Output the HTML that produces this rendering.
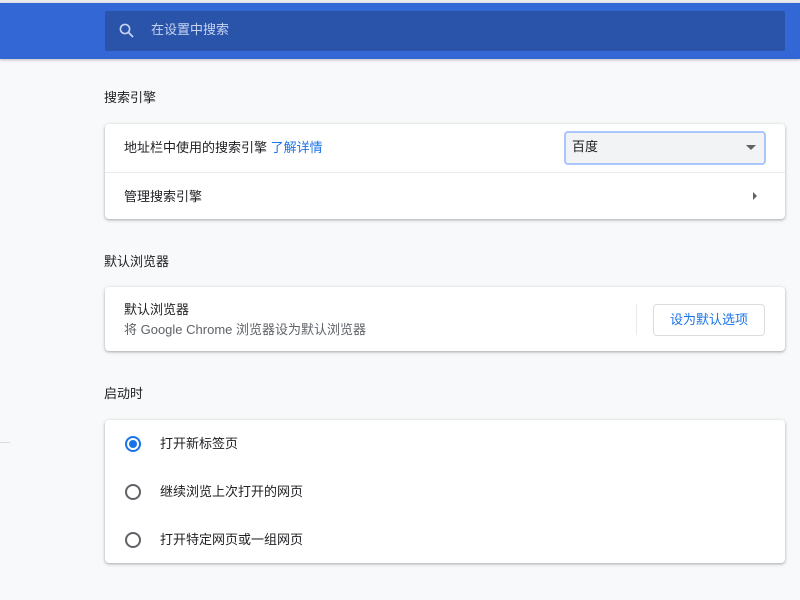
<!DOCTYPE html>
<html><head><meta charset="utf-8"><style>
*{margin:0;padding:0;box-sizing:border-box}
body{width:800px;height:600px;overflow:hidden;background:#f8f9fa;font-family:"Liberation Sans","Noto Sans CJK SC",sans-serif;font-size:13px;color:#202124;position:relative}
.hdr{position:absolute;left:0;top:3px;width:800px;height:56px;background:#3367d6;box-shadow:0 1px 3px rgba(0,0,0,.25)}
.top{position:absolute;left:0;top:0;width:800px;height:3px;background:#e8eaed}
.search{position:absolute;left:105px;top:11px;width:680px;height:40px;background:#2a53aa;border-radius:2px;color:#c6d4f2;font-size:13px;line-height:38px;padding-left:46px}
.card{position:absolute;left:105px;width:680px;background:#fff;border-radius:4px;box-shadow:0 1px 2px rgba(60,64,67,.3),0 1px 3px 1px rgba(60,64,67,.12)}
.h{position:absolute;left:104px;font-size:13px;color:#202124}
.row{position:absolute;left:19px}
</style></head><body>
<div class="top"></div>
<div class="hdr"></div>
<div class="search">在设置中搜索
<svg style="position:absolute;left:13px;top:11px" width="18" height="18" viewBox="0 0 18 18"><circle cx="7" cy="7" r="4.6" fill="none" stroke="#c6d4f2" stroke-width="1.6"/><path d="M10.3 10.3L15 15" stroke="#c6d4f2" stroke-width="1.8"/></svg></div>
<div class="h" style="top:87px">搜索引擎</div>
<div class="card" style="top:124px;height:95px">
 <div class="row" style="top:13px">地址栏中使用的搜索引擎 <span style="color:#1a73e8">了解详情</span></div>
 <div style="position:absolute;left:459px;top:7px;width:202px;height:34px;background:#f1f3f4;border:2px solid #a8c7fa;border-radius:4px;padding-left:6px;line-height:28px">百度<div style="position:absolute;right:8px;top:12px;border-left:5px solid transparent;border-right:5px solid transparent;border-top:5px solid #5f6368"></div></div>
 <div style="position:absolute;left:0;top:48px;width:680px;height:1px;background:#e8eaed"></div>
 <div class="row" style="top:62px">管理搜索引擎</div>
 <div style="position:absolute;left:648px;top:68px;border-top:4px solid transparent;border-bottom:4px solid transparent;border-left:4px solid #5f6368"></div>
</div>
<div class="h" style="top:251px">默认浏览器</div>
<div class="card" style="top:287px;height:64px">
 <div class="row" style="top:12px">默认浏览器</div>
 <div class="row" style="top:32px;color:#5f6368">将 Google Chrome 浏览器设为默认浏览器</div>
 <div style="position:absolute;left:531px;top:17px;width:1px;height:31px;background:#e8eaed"></div>
 <div style="position:absolute;left:548px;top:17px;width:112px;height:32px;border:1px solid #dadce0;border-radius:4px;color:#1a73e8;text-align:center;line-height:29px">设为默认选项</div>
</div>
<div class="h" style="top:383px">启动时</div>
<div style="position:absolute;left:0;top:442px;width:10px;height:1px;background:#dadce0"></div>
<div class="card" style="top:420px;height:143px">
 <div style="position:absolute;left:20px;top:16px;width:16px;height:16px;border:2px solid #1a73e8;border-radius:50%"><div style="position:absolute;left:2px;top:2px;width:8px;height:8px;background:#1a73e8;border-radius:50%"></div></div>
 <div style="position:absolute;left:55px;top:13px">打开新标签页</div>
 <div style="position:absolute;left:20px;top:64px;width:16px;height:16px;border:2px solid #5f6368;border-radius:50%"></div>
 <div style="position:absolute;left:55px;top:61px">继续浏览上次打开的网页</div>
 <div style="position:absolute;left:20px;top:112px;width:16px;height:16px;border:2px solid #5f6368;border-radius:50%"></div>
 <div style="position:absolute;left:55px;top:109px">打开特定网页或一组网页</div>
</div>
</body></html>
